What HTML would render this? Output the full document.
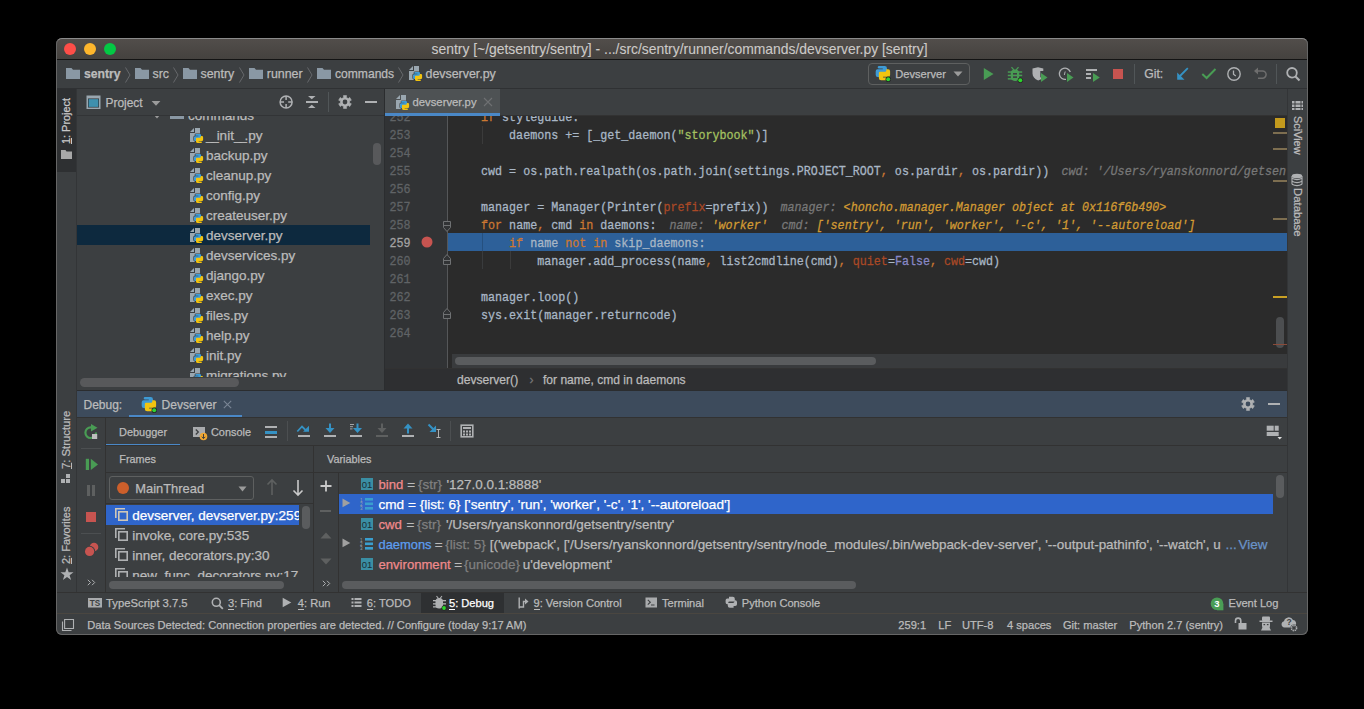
<!DOCTYPE html>
<html><head><meta charset="utf-8">
<style>
*{box-sizing:border-box;margin:0;padding:0}
html,body{width:1364px;height:709px;overflow:hidden;background:#000}
body{position:relative;font-family:"Liberation Sans",sans-serif;color:#BBBBBB}
.a{position:absolute;display:block}
.t{position:absolute;white-space:pre;line-height:1;-webkit-text-stroke:0.25px currentColor}
.mono{font-family:"Liberation Mono",monospace}
#win{position:absolute;left:0;top:0;width:1364px;height:709px;clip-path:inset(38px 56px 74px 56px round 6px)}
.clip{position:absolute;overflow:hidden}
</style></head>
<body>
<div id="win">
<div class="a" style="left:56px;top:38px;width:1252px;height:597px;background:#3C3F41;"></div><div class="a" style="left:56px;top:38px;width:1252px;height:21px;background:#4A4745;background:linear-gradient(#524E4B,#45423F);"></div><div class="a" style="left:56px;top:59px;width:1252px;height:1px;background:#141414;"></div><div class="a" style="left:64px;top:43px;width:12px;height:12px;border-radius:6px;background:#FE4E48"></div><div class="a" style="left:84px;top:43px;width:12px;height:12px;border-radius:6px;background:#FEB62C"></div><div class="a" style="left:104px;top:43px;width:12px;height:12px;border-radius:6px;background:#03C944"></div><div class="t" style="left:431.5px;top:43.00px;font-size:13.9px;color:#CCCAC8;-webkit-text-stroke:0.1px currentColor;">sentry [~/getsentry/sentry] - .../src/sentry/runner/commands/devserver.py [sentry]</div><div class="a" style="left:56px;top:88px;width:1252px;height:1px;background:#2F3133;"></div><svg class="a" style="left:66px;top:68px;" width="14" height="11" viewBox="0 0 14 11"><path d="M0 0H5.5L7 1.8H14V11H0Z" fill="#8A98A4"/></svg><div class="t" style="left:84px;top:68.00px;font-size:12.2px;color:#BBBBBB;font-weight:bold;">sentry</div><svg class="a" style="left:125px;top:67px;" width="6" height="16" viewBox="0 0 6 16"><path d="M0.5 0.5L5 8L0.5 15.5" stroke="#6B6D6F" stroke-width="0.9" fill="none"/></svg><svg class="a" style="left:135px;top:68px;" width="14" height="11" viewBox="0 0 14 11"><path d="M0 0H5.5L7 1.8H14V11H0Z" fill="#8A98A4"/></svg><div class="t" style="left:152.5px;top:68.00px;font-size:12.4px;color:#BBBBBB;">src</div><svg class="a" style="left:173px;top:67px;" width="6" height="16" viewBox="0 0 6 16"><path d="M0.5 0.5L5 8L0.5 15.5" stroke="#6B6D6F" stroke-width="0.9" fill="none"/></svg><svg class="a" style="left:183px;top:68px;" width="14" height="11" viewBox="0 0 14 11"><path d="M0 0H5.5L7 1.8H14V11H0Z" fill="#8A98A4"/></svg><div class="t" style="left:200.5px;top:68.00px;font-size:12.4px;color:#BBBBBB;">sentry</div><svg class="a" style="left:239px;top:67px;" width="6" height="16" viewBox="0 0 6 16"><path d="M0.5 0.5L5 8L0.5 15.5" stroke="#6B6D6F" stroke-width="0.9" fill="none"/></svg><svg class="a" style="left:249px;top:68px;" width="14" height="11" viewBox="0 0 14 11"><path d="M0 0H5.5L7 1.8H14V11H0Z" fill="#8A98A4"/></svg><div class="t" style="left:266.8px;top:68.00px;font-size:12.4px;color:#BBBBBB;">runner</div><svg class="a" style="left:307px;top:67px;" width="6" height="16" viewBox="0 0 6 16"><path d="M0.5 0.5L5 8L0.5 15.5" stroke="#6B6D6F" stroke-width="0.9" fill="none"/></svg><svg class="a" style="left:317px;top:68px;" width="14" height="11" viewBox="0 0 14 11"><path d="M0 0H5.5L7 1.8H14V11H0Z" fill="#8A98A4"/></svg><div class="t" style="left:335px;top:68.00px;font-size:12.1px;color:#BBBBBB;">commands</div><svg class="a" style="left:398px;top:67px;" width="6" height="16" viewBox="0 0 6 16"><path d="M0.5 0.5L5 8L0.5 15.5" stroke="#6B6D6F" stroke-width="0.9" fill="none"/></svg><svg class="a" style="left:408px;top:65px;" width="16" height="17" viewBox="0 0 16 17"><path d="M1 5L5 1V5Z" fill="#9AA7B0"/><path d="M6 1H11V6H6Z" fill="#9AA7B0"/><path d="M1 6H6V15H1Z" fill="#9AA7B0"/><path d="M6 6H11V9H6Z" fill="#9AA7B0"/><g transform="translate(4.8,6.8) scale(0.95)"><g transform="translate(0,0)" fill="#3C3F41" stroke="#3C3F41" stroke-width="1.3"><path d="M2.6 0.3H6.2A1.5 1.5 0 0 1 7.7 1.8V5A0.9 0.9 0 0 1 6.8 5.9H3.7A1 1 0 0 0 2.7 6.9V7.6H1.5A1.3 1.3 0 0 1 0.2 6.3V3.8A1.3 1.3 0 0 1 1.5 2.5H4.9V2H2.2A0.4 0.4 0 0 1 2.6 0.3Z"/><path d="M7.4 9.7H3.8A1.5 1.5 0 0 1 2.3 8.2V5A0.9 0.9 0 0 1 3.2 4.1H6.3A1 1 0 0 0 7.3 3.1V2.4H8.5A1.3 1.3 0 0 1 9.8 3.7V6.2A1.3 1.3 0 0 1 8.5 7.5H5.1V8H7.8A0.4 0.4 0 0 1 7.4 9.7Z"/></g><path d="M2.6 0.3H6.2A1.5 1.5 0 0 1 7.7 1.8V5A0.9 0.9 0 0 1 6.8 5.9H3.7A1 1 0 0 0 2.7 6.9V7.6H1.5A1.3 1.3 0 0 1 0.2 6.3V3.8A1.3 1.3 0 0 1 1.5 2.5H4.9V2H2.2A0.4 0.4 0 0 1 2.6 0.3Z" transform="translate(0,0)" fill="#3E9BD5"/><path d="M7.4 9.7H3.8A1.5 1.5 0 0 1 2.3 8.2V5A0.9 0.9 0 0 1 3.2 4.1H6.3A1 1 0 0 0 7.3 3.1V2.4H8.5A1.3 1.3 0 0 1 9.8 3.7V6.2A1.3 1.3 0 0 1 8.5 7.5H5.1V8H7.8A0.4 0.4 0 0 1 7.4 9.7Z" transform="translate(0,0)" fill="#F2C40F"/></g></svg><div class="t" style="left:425.5px;top:68.00px;font-size:12.4px;color:#BBBBBB;">devserver.py</div><div class="a" style="left:76px;top:89px;width:1px;height:503px;background:#333537;"></div><div class="a" style="left:57px;top:89px;width:19px;height:83px;background:#2E3032;"></div><div class="a" style="left:1287px;top:89px;width:1px;height:503px;background:#333537;"></div><div class="a" style="left:77px;top:115px;width:307px;height:1px;background:#323436;"></div><div class="a" style="left:384px;top:89px;width:1px;height:302px;background:#2B2D2F;"></div><div class="t" style="left:105.5px;top:98.00px;font-size:11.95px;color:#BBBBBB;">Project</div><div class="a" style="left:77px;top:225px;width:293px;height:20px;background:#0D293E;"></div><div class="clip" style="left:77px;top:116px;width:293px;height:261px"><svg class="a" style="left:93px;top:-8px" width="14" height="11"><path d="M0 0H5.5L7 1.8H14V11H0Z" fill="#8A98A4"/></svg><div class="t" style="left:111px;top:-7.00px;font-size:13.5px;color:#BBBBBB">commands</div><svg class="a" style="left:76px;top:-3px" width="8" height="8"><path d="M0.5 1.5H7.5L4 5.5Z" fill="#9A9A9A"/></svg><svg class="a" style="left:112px;top:11px" width="16" height="17" viewBox="0 0 16 17"><path d="M1 5L5 1V5Z" fill="#9AA7B0"/><path d="M6 1H11V6H6Z" fill="#9AA7B0"/><path d="M1 6H6V15H1Z" fill="#9AA7B0"/><path d="M6 6H11V9H6Z" fill="#9AA7B0"/><g transform="translate(4.8,6.8) scale(0.95)"><g transform="translate(0,0)" fill="#3C3F41" stroke="#3C3F41" stroke-width="1.3"><path d="M2.6 0.3H6.2A1.5 1.5 0 0 1 7.7 1.8V5A0.9 0.9 0 0 1 6.8 5.9H3.7A1 1 0 0 0 2.7 6.9V7.6H1.5A1.3 1.3 0 0 1 0.2 6.3V3.8A1.3 1.3 0 0 1 1.5 2.5H4.9V2H2.2A0.4 0.4 0 0 1 2.6 0.3Z"/><path d="M7.4 9.7H3.8A1.5 1.5 0 0 1 2.3 8.2V5A0.9 0.9 0 0 1 3.2 4.1H6.3A1 1 0 0 0 7.3 3.1V2.4H8.5A1.3 1.3 0 0 1 9.8 3.7V6.2A1.3 1.3 0 0 1 8.5 7.5H5.1V8H7.8A0.4 0.4 0 0 1 7.4 9.7Z"/></g><path d="M2.6 0.3H6.2A1.5 1.5 0 0 1 7.7 1.8V5A0.9 0.9 0 0 1 6.8 5.9H3.7A1 1 0 0 0 2.7 6.9V7.6H1.5A1.3 1.3 0 0 1 0.2 6.3V3.8A1.3 1.3 0 0 1 1.5 2.5H4.9V2H2.2A0.4 0.4 0 0 1 2.6 0.3Z" transform="translate(0,0)" fill="#3E9BD5"/><path d="M7.4 9.7H3.8A1.5 1.5 0 0 1 2.3 8.2V5A0.9 0.9 0 0 1 3.2 4.1H6.3A1 1 0 0 0 7.3 3.1V2.4H8.5A1.3 1.3 0 0 1 9.8 3.7V6.2A1.3 1.3 0 0 1 8.5 7.5H5.1V8H7.8A0.4 0.4 0 0 1 7.4 9.7Z" transform="translate(0,0)" fill="#F2C40F"/></g></svg><div class="t" style="left:129px;top:13.00px;font-size:13.5px;color:#BBBBBB"><span style="letter-spacing:-2.2px">__</span>init<span style="letter-spacing:-2.2px">__</span>.py</div><svg class="a" style="left:112px;top:31px" width="16" height="17" viewBox="0 0 16 17"><path d="M1 5L5 1V5Z" fill="#9AA7B0"/><path d="M6 1H11V6H6Z" fill="#9AA7B0"/><path d="M1 6H6V15H1Z" fill="#9AA7B0"/><path d="M6 6H11V9H6Z" fill="#9AA7B0"/><g transform="translate(4.8,6.8) scale(0.95)"><g transform="translate(0,0)" fill="#3C3F41" stroke="#3C3F41" stroke-width="1.3"><path d="M2.6 0.3H6.2A1.5 1.5 0 0 1 7.7 1.8V5A0.9 0.9 0 0 1 6.8 5.9H3.7A1 1 0 0 0 2.7 6.9V7.6H1.5A1.3 1.3 0 0 1 0.2 6.3V3.8A1.3 1.3 0 0 1 1.5 2.5H4.9V2H2.2A0.4 0.4 0 0 1 2.6 0.3Z"/><path d="M7.4 9.7H3.8A1.5 1.5 0 0 1 2.3 8.2V5A0.9 0.9 0 0 1 3.2 4.1H6.3A1 1 0 0 0 7.3 3.1V2.4H8.5A1.3 1.3 0 0 1 9.8 3.7V6.2A1.3 1.3 0 0 1 8.5 7.5H5.1V8H7.8A0.4 0.4 0 0 1 7.4 9.7Z"/></g><path d="M2.6 0.3H6.2A1.5 1.5 0 0 1 7.7 1.8V5A0.9 0.9 0 0 1 6.8 5.9H3.7A1 1 0 0 0 2.7 6.9V7.6H1.5A1.3 1.3 0 0 1 0.2 6.3V3.8A1.3 1.3 0 0 1 1.5 2.5H4.9V2H2.2A0.4 0.4 0 0 1 2.6 0.3Z" transform="translate(0,0)" fill="#3E9BD5"/><path d="M7.4 9.7H3.8A1.5 1.5 0 0 1 2.3 8.2V5A0.9 0.9 0 0 1 3.2 4.1H6.3A1 1 0 0 0 7.3 3.1V2.4H8.5A1.3 1.3 0 0 1 9.8 3.7V6.2A1.3 1.3 0 0 1 8.5 7.5H5.1V8H7.8A0.4 0.4 0 0 1 7.4 9.7Z" transform="translate(0,0)" fill="#F2C40F"/></g></svg><div class="t" style="left:129px;top:33.00px;font-size:13.5px;color:#BBBBBB">backup.py</div><svg class="a" style="left:112px;top:51px" width="16" height="17" viewBox="0 0 16 17"><path d="M1 5L5 1V5Z" fill="#9AA7B0"/><path d="M6 1H11V6H6Z" fill="#9AA7B0"/><path d="M1 6H6V15H1Z" fill="#9AA7B0"/><path d="M6 6H11V9H6Z" fill="#9AA7B0"/><g transform="translate(4.8,6.8) scale(0.95)"><g transform="translate(0,0)" fill="#3C3F41" stroke="#3C3F41" stroke-width="1.3"><path d="M2.6 0.3H6.2A1.5 1.5 0 0 1 7.7 1.8V5A0.9 0.9 0 0 1 6.8 5.9H3.7A1 1 0 0 0 2.7 6.9V7.6H1.5A1.3 1.3 0 0 1 0.2 6.3V3.8A1.3 1.3 0 0 1 1.5 2.5H4.9V2H2.2A0.4 0.4 0 0 1 2.6 0.3Z"/><path d="M7.4 9.7H3.8A1.5 1.5 0 0 1 2.3 8.2V5A0.9 0.9 0 0 1 3.2 4.1H6.3A1 1 0 0 0 7.3 3.1V2.4H8.5A1.3 1.3 0 0 1 9.8 3.7V6.2A1.3 1.3 0 0 1 8.5 7.5H5.1V8H7.8A0.4 0.4 0 0 1 7.4 9.7Z"/></g><path d="M2.6 0.3H6.2A1.5 1.5 0 0 1 7.7 1.8V5A0.9 0.9 0 0 1 6.8 5.9H3.7A1 1 0 0 0 2.7 6.9V7.6H1.5A1.3 1.3 0 0 1 0.2 6.3V3.8A1.3 1.3 0 0 1 1.5 2.5H4.9V2H2.2A0.4 0.4 0 0 1 2.6 0.3Z" transform="translate(0,0)" fill="#3E9BD5"/><path d="M7.4 9.7H3.8A1.5 1.5 0 0 1 2.3 8.2V5A0.9 0.9 0 0 1 3.2 4.1H6.3A1 1 0 0 0 7.3 3.1V2.4H8.5A1.3 1.3 0 0 1 9.8 3.7V6.2A1.3 1.3 0 0 1 8.5 7.5H5.1V8H7.8A0.4 0.4 0 0 1 7.4 9.7Z" transform="translate(0,0)" fill="#F2C40F"/></g></svg><div class="t" style="left:129px;top:53.00px;font-size:13.5px;color:#BBBBBB">cleanup.py</div><svg class="a" style="left:112px;top:71px" width="16" height="17" viewBox="0 0 16 17"><path d="M1 5L5 1V5Z" fill="#9AA7B0"/><path d="M6 1H11V6H6Z" fill="#9AA7B0"/><path d="M1 6H6V15H1Z" fill="#9AA7B0"/><path d="M6 6H11V9H6Z" fill="#9AA7B0"/><g transform="translate(4.8,6.8) scale(0.95)"><g transform="translate(0,0)" fill="#3C3F41" stroke="#3C3F41" stroke-width="1.3"><path d="M2.6 0.3H6.2A1.5 1.5 0 0 1 7.7 1.8V5A0.9 0.9 0 0 1 6.8 5.9H3.7A1 1 0 0 0 2.7 6.9V7.6H1.5A1.3 1.3 0 0 1 0.2 6.3V3.8A1.3 1.3 0 0 1 1.5 2.5H4.9V2H2.2A0.4 0.4 0 0 1 2.6 0.3Z"/><path d="M7.4 9.7H3.8A1.5 1.5 0 0 1 2.3 8.2V5A0.9 0.9 0 0 1 3.2 4.1H6.3A1 1 0 0 0 7.3 3.1V2.4H8.5A1.3 1.3 0 0 1 9.8 3.7V6.2A1.3 1.3 0 0 1 8.5 7.5H5.1V8H7.8A0.4 0.4 0 0 1 7.4 9.7Z"/></g><path d="M2.6 0.3H6.2A1.5 1.5 0 0 1 7.7 1.8V5A0.9 0.9 0 0 1 6.8 5.9H3.7A1 1 0 0 0 2.7 6.9V7.6H1.5A1.3 1.3 0 0 1 0.2 6.3V3.8A1.3 1.3 0 0 1 1.5 2.5H4.9V2H2.2A0.4 0.4 0 0 1 2.6 0.3Z" transform="translate(0,0)" fill="#3E9BD5"/><path d="M7.4 9.7H3.8A1.5 1.5 0 0 1 2.3 8.2V5A0.9 0.9 0 0 1 3.2 4.1H6.3A1 1 0 0 0 7.3 3.1V2.4H8.5A1.3 1.3 0 0 1 9.8 3.7V6.2A1.3 1.3 0 0 1 8.5 7.5H5.1V8H7.8A0.4 0.4 0 0 1 7.4 9.7Z" transform="translate(0,0)" fill="#F2C40F"/></g></svg><div class="t" style="left:129px;top:73.00px;font-size:13.5px;color:#BBBBBB">config.py</div><svg class="a" style="left:112px;top:91px" width="16" height="17" viewBox="0 0 16 17"><path d="M1 5L5 1V5Z" fill="#9AA7B0"/><path d="M6 1H11V6H6Z" fill="#9AA7B0"/><path d="M1 6H6V15H1Z" fill="#9AA7B0"/><path d="M6 6H11V9H6Z" fill="#9AA7B0"/><g transform="translate(4.8,6.8) scale(0.95)"><g transform="translate(0,0)" fill="#3C3F41" stroke="#3C3F41" stroke-width="1.3"><path d="M2.6 0.3H6.2A1.5 1.5 0 0 1 7.7 1.8V5A0.9 0.9 0 0 1 6.8 5.9H3.7A1 1 0 0 0 2.7 6.9V7.6H1.5A1.3 1.3 0 0 1 0.2 6.3V3.8A1.3 1.3 0 0 1 1.5 2.5H4.9V2H2.2A0.4 0.4 0 0 1 2.6 0.3Z"/><path d="M7.4 9.7H3.8A1.5 1.5 0 0 1 2.3 8.2V5A0.9 0.9 0 0 1 3.2 4.1H6.3A1 1 0 0 0 7.3 3.1V2.4H8.5A1.3 1.3 0 0 1 9.8 3.7V6.2A1.3 1.3 0 0 1 8.5 7.5H5.1V8H7.8A0.4 0.4 0 0 1 7.4 9.7Z"/></g><path d="M2.6 0.3H6.2A1.5 1.5 0 0 1 7.7 1.8V5A0.9 0.9 0 0 1 6.8 5.9H3.7A1 1 0 0 0 2.7 6.9V7.6H1.5A1.3 1.3 0 0 1 0.2 6.3V3.8A1.3 1.3 0 0 1 1.5 2.5H4.9V2H2.2A0.4 0.4 0 0 1 2.6 0.3Z" transform="translate(0,0)" fill="#3E9BD5"/><path d="M7.4 9.7H3.8A1.5 1.5 0 0 1 2.3 8.2V5A0.9 0.9 0 0 1 3.2 4.1H6.3A1 1 0 0 0 7.3 3.1V2.4H8.5A1.3 1.3 0 0 1 9.8 3.7V6.2A1.3 1.3 0 0 1 8.5 7.5H5.1V8H7.8A0.4 0.4 0 0 1 7.4 9.7Z" transform="translate(0,0)" fill="#F2C40F"/></g></svg><div class="t" style="left:129px;top:93.00px;font-size:13.5px;color:#BBBBBB">createuser.py</div><svg class="a" style="left:112px;top:111px" width="16" height="17" viewBox="0 0 16 17"><path d="M1 5L5 1V5Z" fill="#9AA7B0"/><path d="M6 1H11V6H6Z" fill="#9AA7B0"/><path d="M1 6H6V15H1Z" fill="#9AA7B0"/><path d="M6 6H11V9H6Z" fill="#9AA7B0"/><g transform="translate(4.8,6.8) scale(0.95)"><g transform="translate(0,0)" fill="#0D293E" stroke="#0D293E" stroke-width="1.3"><path d="M2.6 0.3H6.2A1.5 1.5 0 0 1 7.7 1.8V5A0.9 0.9 0 0 1 6.8 5.9H3.7A1 1 0 0 0 2.7 6.9V7.6H1.5A1.3 1.3 0 0 1 0.2 6.3V3.8A1.3 1.3 0 0 1 1.5 2.5H4.9V2H2.2A0.4 0.4 0 0 1 2.6 0.3Z"/><path d="M7.4 9.7H3.8A1.5 1.5 0 0 1 2.3 8.2V5A0.9 0.9 0 0 1 3.2 4.1H6.3A1 1 0 0 0 7.3 3.1V2.4H8.5A1.3 1.3 0 0 1 9.8 3.7V6.2A1.3 1.3 0 0 1 8.5 7.5H5.1V8H7.8A0.4 0.4 0 0 1 7.4 9.7Z"/></g><path d="M2.6 0.3H6.2A1.5 1.5 0 0 1 7.7 1.8V5A0.9 0.9 0 0 1 6.8 5.9H3.7A1 1 0 0 0 2.7 6.9V7.6H1.5A1.3 1.3 0 0 1 0.2 6.3V3.8A1.3 1.3 0 0 1 1.5 2.5H4.9V2H2.2A0.4 0.4 0 0 1 2.6 0.3Z" transform="translate(0,0)" fill="#3E9BD5"/><path d="M7.4 9.7H3.8A1.5 1.5 0 0 1 2.3 8.2V5A0.9 0.9 0 0 1 3.2 4.1H6.3A1 1 0 0 0 7.3 3.1V2.4H8.5A1.3 1.3 0 0 1 9.8 3.7V6.2A1.3 1.3 0 0 1 8.5 7.5H5.1V8H7.8A0.4 0.4 0 0 1 7.4 9.7Z" transform="translate(0,0)" fill="#F2C40F"/></g></svg><div class="t" style="left:129px;top:113.00px;font-size:13.5px;color:#BBBBBB">devserver.py</div><svg class="a" style="left:112px;top:131px" width="16" height="17" viewBox="0 0 16 17"><path d="M1 5L5 1V5Z" fill="#9AA7B0"/><path d="M6 1H11V6H6Z" fill="#9AA7B0"/><path d="M1 6H6V15H1Z" fill="#9AA7B0"/><path d="M6 6H11V9H6Z" fill="#9AA7B0"/><g transform="translate(4.8,6.8) scale(0.95)"><g transform="translate(0,0)" fill="#3C3F41" stroke="#3C3F41" stroke-width="1.3"><path d="M2.6 0.3H6.2A1.5 1.5 0 0 1 7.7 1.8V5A0.9 0.9 0 0 1 6.8 5.9H3.7A1 1 0 0 0 2.7 6.9V7.6H1.5A1.3 1.3 0 0 1 0.2 6.3V3.8A1.3 1.3 0 0 1 1.5 2.5H4.9V2H2.2A0.4 0.4 0 0 1 2.6 0.3Z"/><path d="M7.4 9.7H3.8A1.5 1.5 0 0 1 2.3 8.2V5A0.9 0.9 0 0 1 3.2 4.1H6.3A1 1 0 0 0 7.3 3.1V2.4H8.5A1.3 1.3 0 0 1 9.8 3.7V6.2A1.3 1.3 0 0 1 8.5 7.5H5.1V8H7.8A0.4 0.4 0 0 1 7.4 9.7Z"/></g><path d="M2.6 0.3H6.2A1.5 1.5 0 0 1 7.7 1.8V5A0.9 0.9 0 0 1 6.8 5.9H3.7A1 1 0 0 0 2.7 6.9V7.6H1.5A1.3 1.3 0 0 1 0.2 6.3V3.8A1.3 1.3 0 0 1 1.5 2.5H4.9V2H2.2A0.4 0.4 0 0 1 2.6 0.3Z" transform="translate(0,0)" fill="#3E9BD5"/><path d="M7.4 9.7H3.8A1.5 1.5 0 0 1 2.3 8.2V5A0.9 0.9 0 0 1 3.2 4.1H6.3A1 1 0 0 0 7.3 3.1V2.4H8.5A1.3 1.3 0 0 1 9.8 3.7V6.2A1.3 1.3 0 0 1 8.5 7.5H5.1V8H7.8A0.4 0.4 0 0 1 7.4 9.7Z" transform="translate(0,0)" fill="#F2C40F"/></g></svg><div class="t" style="left:129px;top:133.00px;font-size:13.5px;color:#BBBBBB">devservices.py</div><svg class="a" style="left:112px;top:151px" width="16" height="17" viewBox="0 0 16 17"><path d="M1 5L5 1V5Z" fill="#9AA7B0"/><path d="M6 1H11V6H6Z" fill="#9AA7B0"/><path d="M1 6H6V15H1Z" fill="#9AA7B0"/><path d="M6 6H11V9H6Z" fill="#9AA7B0"/><g transform="translate(4.8,6.8) scale(0.95)"><g transform="translate(0,0)" fill="#3C3F41" stroke="#3C3F41" stroke-width="1.3"><path d="M2.6 0.3H6.2A1.5 1.5 0 0 1 7.7 1.8V5A0.9 0.9 0 0 1 6.8 5.9H3.7A1 1 0 0 0 2.7 6.9V7.6H1.5A1.3 1.3 0 0 1 0.2 6.3V3.8A1.3 1.3 0 0 1 1.5 2.5H4.9V2H2.2A0.4 0.4 0 0 1 2.6 0.3Z"/><path d="M7.4 9.7H3.8A1.5 1.5 0 0 1 2.3 8.2V5A0.9 0.9 0 0 1 3.2 4.1H6.3A1 1 0 0 0 7.3 3.1V2.4H8.5A1.3 1.3 0 0 1 9.8 3.7V6.2A1.3 1.3 0 0 1 8.5 7.5H5.1V8H7.8A0.4 0.4 0 0 1 7.4 9.7Z"/></g><path d="M2.6 0.3H6.2A1.5 1.5 0 0 1 7.7 1.8V5A0.9 0.9 0 0 1 6.8 5.9H3.7A1 1 0 0 0 2.7 6.9V7.6H1.5A1.3 1.3 0 0 1 0.2 6.3V3.8A1.3 1.3 0 0 1 1.5 2.5H4.9V2H2.2A0.4 0.4 0 0 1 2.6 0.3Z" transform="translate(0,0)" fill="#3E9BD5"/><path d="M7.4 9.7H3.8A1.5 1.5 0 0 1 2.3 8.2V5A0.9 0.9 0 0 1 3.2 4.1H6.3A1 1 0 0 0 7.3 3.1V2.4H8.5A1.3 1.3 0 0 1 9.8 3.7V6.2A1.3 1.3 0 0 1 8.5 7.5H5.1V8H7.8A0.4 0.4 0 0 1 7.4 9.7Z" transform="translate(0,0)" fill="#F2C40F"/></g></svg><div class="t" style="left:129px;top:153.00px;font-size:13.5px;color:#BBBBBB">django.py</div><svg class="a" style="left:112px;top:171px" width="16" height="17" viewBox="0 0 16 17"><path d="M1 5L5 1V5Z" fill="#9AA7B0"/><path d="M6 1H11V6H6Z" fill="#9AA7B0"/><path d="M1 6H6V15H1Z" fill="#9AA7B0"/><path d="M6 6H11V9H6Z" fill="#9AA7B0"/><g transform="translate(4.8,6.8) scale(0.95)"><g transform="translate(0,0)" fill="#3C3F41" stroke="#3C3F41" stroke-width="1.3"><path d="M2.6 0.3H6.2A1.5 1.5 0 0 1 7.7 1.8V5A0.9 0.9 0 0 1 6.8 5.9H3.7A1 1 0 0 0 2.7 6.9V7.6H1.5A1.3 1.3 0 0 1 0.2 6.3V3.8A1.3 1.3 0 0 1 1.5 2.5H4.9V2H2.2A0.4 0.4 0 0 1 2.6 0.3Z"/><path d="M7.4 9.7H3.8A1.5 1.5 0 0 1 2.3 8.2V5A0.9 0.9 0 0 1 3.2 4.1H6.3A1 1 0 0 0 7.3 3.1V2.4H8.5A1.3 1.3 0 0 1 9.8 3.7V6.2A1.3 1.3 0 0 1 8.5 7.5H5.1V8H7.8A0.4 0.4 0 0 1 7.4 9.7Z"/></g><path d="M2.6 0.3H6.2A1.5 1.5 0 0 1 7.7 1.8V5A0.9 0.9 0 0 1 6.8 5.9H3.7A1 1 0 0 0 2.7 6.9V7.6H1.5A1.3 1.3 0 0 1 0.2 6.3V3.8A1.3 1.3 0 0 1 1.5 2.5H4.9V2H2.2A0.4 0.4 0 0 1 2.6 0.3Z" transform="translate(0,0)" fill="#3E9BD5"/><path d="M7.4 9.7H3.8A1.5 1.5 0 0 1 2.3 8.2V5A0.9 0.9 0 0 1 3.2 4.1H6.3A1 1 0 0 0 7.3 3.1V2.4H8.5A1.3 1.3 0 0 1 9.8 3.7V6.2A1.3 1.3 0 0 1 8.5 7.5H5.1V8H7.8A0.4 0.4 0 0 1 7.4 9.7Z" transform="translate(0,0)" fill="#F2C40F"/></g></svg><div class="t" style="left:129px;top:173.00px;font-size:13.5px;color:#BBBBBB">exec.py</div><svg class="a" style="left:112px;top:191px" width="16" height="17" viewBox="0 0 16 17"><path d="M1 5L5 1V5Z" fill="#9AA7B0"/><path d="M6 1H11V6H6Z" fill="#9AA7B0"/><path d="M1 6H6V15H1Z" fill="#9AA7B0"/><path d="M6 6H11V9H6Z" fill="#9AA7B0"/><g transform="translate(4.8,6.8) scale(0.95)"><g transform="translate(0,0)" fill="#3C3F41" stroke="#3C3F41" stroke-width="1.3"><path d="M2.6 0.3H6.2A1.5 1.5 0 0 1 7.7 1.8V5A0.9 0.9 0 0 1 6.8 5.9H3.7A1 1 0 0 0 2.7 6.9V7.6H1.5A1.3 1.3 0 0 1 0.2 6.3V3.8A1.3 1.3 0 0 1 1.5 2.5H4.9V2H2.2A0.4 0.4 0 0 1 2.6 0.3Z"/><path d="M7.4 9.7H3.8A1.5 1.5 0 0 1 2.3 8.2V5A0.9 0.9 0 0 1 3.2 4.1H6.3A1 1 0 0 0 7.3 3.1V2.4H8.5A1.3 1.3 0 0 1 9.8 3.7V6.2A1.3 1.3 0 0 1 8.5 7.5H5.1V8H7.8A0.4 0.4 0 0 1 7.4 9.7Z"/></g><path d="M2.6 0.3H6.2A1.5 1.5 0 0 1 7.7 1.8V5A0.9 0.9 0 0 1 6.8 5.9H3.7A1 1 0 0 0 2.7 6.9V7.6H1.5A1.3 1.3 0 0 1 0.2 6.3V3.8A1.3 1.3 0 0 1 1.5 2.5H4.9V2H2.2A0.4 0.4 0 0 1 2.6 0.3Z" transform="translate(0,0)" fill="#3E9BD5"/><path d="M7.4 9.7H3.8A1.5 1.5 0 0 1 2.3 8.2V5A0.9 0.9 0 0 1 3.2 4.1H6.3A1 1 0 0 0 7.3 3.1V2.4H8.5A1.3 1.3 0 0 1 9.8 3.7V6.2A1.3 1.3 0 0 1 8.5 7.5H5.1V8H7.8A0.4 0.4 0 0 1 7.4 9.7Z" transform="translate(0,0)" fill="#F2C40F"/></g></svg><div class="t" style="left:129px;top:193.00px;font-size:13.5px;color:#BBBBBB">files.py</div><svg class="a" style="left:112px;top:211px" width="16" height="17" viewBox="0 0 16 17"><path d="M1 5L5 1V5Z" fill="#9AA7B0"/><path d="M6 1H11V6H6Z" fill="#9AA7B0"/><path d="M1 6H6V15H1Z" fill="#9AA7B0"/><path d="M6 6H11V9H6Z" fill="#9AA7B0"/><g transform="translate(4.8,6.8) scale(0.95)"><g transform="translate(0,0)" fill="#3C3F41" stroke="#3C3F41" stroke-width="1.3"><path d="M2.6 0.3H6.2A1.5 1.5 0 0 1 7.7 1.8V5A0.9 0.9 0 0 1 6.8 5.9H3.7A1 1 0 0 0 2.7 6.9V7.6H1.5A1.3 1.3 0 0 1 0.2 6.3V3.8A1.3 1.3 0 0 1 1.5 2.5H4.9V2H2.2A0.4 0.4 0 0 1 2.6 0.3Z"/><path d="M7.4 9.7H3.8A1.5 1.5 0 0 1 2.3 8.2V5A0.9 0.9 0 0 1 3.2 4.1H6.3A1 1 0 0 0 7.3 3.1V2.4H8.5A1.3 1.3 0 0 1 9.8 3.7V6.2A1.3 1.3 0 0 1 8.5 7.5H5.1V8H7.8A0.4 0.4 0 0 1 7.4 9.7Z"/></g><path d="M2.6 0.3H6.2A1.5 1.5 0 0 1 7.7 1.8V5A0.9 0.9 0 0 1 6.8 5.9H3.7A1 1 0 0 0 2.7 6.9V7.6H1.5A1.3 1.3 0 0 1 0.2 6.3V3.8A1.3 1.3 0 0 1 1.5 2.5H4.9V2H2.2A0.4 0.4 0 0 1 2.6 0.3Z" transform="translate(0,0)" fill="#3E9BD5"/><path d="M7.4 9.7H3.8A1.5 1.5 0 0 1 2.3 8.2V5A0.9 0.9 0 0 1 3.2 4.1H6.3A1 1 0 0 0 7.3 3.1V2.4H8.5A1.3 1.3 0 0 1 9.8 3.7V6.2A1.3 1.3 0 0 1 8.5 7.5H5.1V8H7.8A0.4 0.4 0 0 1 7.4 9.7Z" transform="translate(0,0)" fill="#F2C40F"/></g></svg><div class="t" style="left:129px;top:213.00px;font-size:13.5px;color:#BBBBBB">help.py</div><svg class="a" style="left:112px;top:231px" width="16" height="17" viewBox="0 0 16 17"><path d="M1 5L5 1V5Z" fill="#9AA7B0"/><path d="M6 1H11V6H6Z" fill="#9AA7B0"/><path d="M1 6H6V15H1Z" fill="#9AA7B0"/><path d="M6 6H11V9H6Z" fill="#9AA7B0"/><g transform="translate(4.8,6.8) scale(0.95)"><g transform="translate(0,0)" fill="#3C3F41" stroke="#3C3F41" stroke-width="1.3"><path d="M2.6 0.3H6.2A1.5 1.5 0 0 1 7.7 1.8V5A0.9 0.9 0 0 1 6.8 5.9H3.7A1 1 0 0 0 2.7 6.9V7.6H1.5A1.3 1.3 0 0 1 0.2 6.3V3.8A1.3 1.3 0 0 1 1.5 2.5H4.9V2H2.2A0.4 0.4 0 0 1 2.6 0.3Z"/><path d="M7.4 9.7H3.8A1.5 1.5 0 0 1 2.3 8.2V5A0.9 0.9 0 0 1 3.2 4.1H6.3A1 1 0 0 0 7.3 3.1V2.4H8.5A1.3 1.3 0 0 1 9.8 3.7V6.2A1.3 1.3 0 0 1 8.5 7.5H5.1V8H7.8A0.4 0.4 0 0 1 7.4 9.7Z"/></g><path d="M2.6 0.3H6.2A1.5 1.5 0 0 1 7.7 1.8V5A0.9 0.9 0 0 1 6.8 5.9H3.7A1 1 0 0 0 2.7 6.9V7.6H1.5A1.3 1.3 0 0 1 0.2 6.3V3.8A1.3 1.3 0 0 1 1.5 2.5H4.9V2H2.2A0.4 0.4 0 0 1 2.6 0.3Z" transform="translate(0,0)" fill="#3E9BD5"/><path d="M7.4 9.7H3.8A1.5 1.5 0 0 1 2.3 8.2V5A0.9 0.9 0 0 1 3.2 4.1H6.3A1 1 0 0 0 7.3 3.1V2.4H8.5A1.3 1.3 0 0 1 9.8 3.7V6.2A1.3 1.3 0 0 1 8.5 7.5H5.1V8H7.8A0.4 0.4 0 0 1 7.4 9.7Z" transform="translate(0,0)" fill="#F2C40F"/></g></svg><div class="t" style="left:129px;top:233.00px;font-size:13.5px;color:#BBBBBB">init.py</div><svg class="a" style="left:112px;top:251px" width="16" height="17" viewBox="0 0 16 17"><path d="M1 5L5 1V5Z" fill="#9AA7B0"/><path d="M6 1H11V6H6Z" fill="#9AA7B0"/><path d="M1 6H6V15H1Z" fill="#9AA7B0"/><path d="M6 6H11V9H6Z" fill="#9AA7B0"/><g transform="translate(4.8,6.8) scale(0.95)"><g transform="translate(0,0)" fill="#3C3F41" stroke="#3C3F41" stroke-width="1.3"><path d="M2.6 0.3H6.2A1.5 1.5 0 0 1 7.7 1.8V5A0.9 0.9 0 0 1 6.8 5.9H3.7A1 1 0 0 0 2.7 6.9V7.6H1.5A1.3 1.3 0 0 1 0.2 6.3V3.8A1.3 1.3 0 0 1 1.5 2.5H4.9V2H2.2A0.4 0.4 0 0 1 2.6 0.3Z"/><path d="M7.4 9.7H3.8A1.5 1.5 0 0 1 2.3 8.2V5A0.9 0.9 0 0 1 3.2 4.1H6.3A1 1 0 0 0 7.3 3.1V2.4H8.5A1.3 1.3 0 0 1 9.8 3.7V6.2A1.3 1.3 0 0 1 8.5 7.5H5.1V8H7.8A0.4 0.4 0 0 1 7.4 9.7Z"/></g><path d="M2.6 0.3H6.2A1.5 1.5 0 0 1 7.7 1.8V5A0.9 0.9 0 0 1 6.8 5.9H3.7A1 1 0 0 0 2.7 6.9V7.6H1.5A1.3 1.3 0 0 1 0.2 6.3V3.8A1.3 1.3 0 0 1 1.5 2.5H4.9V2H2.2A0.4 0.4 0 0 1 2.6 0.3Z" transform="translate(0,0)" fill="#3E9BD5"/><path d="M7.4 9.7H3.8A1.5 1.5 0 0 1 2.3 8.2V5A0.9 0.9 0 0 1 3.2 4.1H6.3A1 1 0 0 0 7.3 3.1V2.4H8.5A1.3 1.3 0 0 1 9.8 3.7V6.2A1.3 1.3 0 0 1 8.5 7.5H5.1V8H7.8A0.4 0.4 0 0 1 7.4 9.7Z" transform="translate(0,0)" fill="#F2C40F"/></g></svg><div class="t" style="left:129px;top:253.00px;font-size:13.5px;color:#BBBBBB">migrations.py</div></div><div class="a" style="left:385px;top:89px;width:115px;height:24px;background:#4E5254;"></div><div class="a" style="left:385px;top:113px;width:115px;height:3px;background:#4A88C7;"></div><div class="a" style="left:500px;top:115px;width:787px;height:1px;background:#323232;"></div><svg class="a" style="left:395px;top:94px;" width="16" height="17" viewBox="0 0 16 17"><path d="M1 5L5 1V5Z" fill="#9AA7B0"/><path d="M6 1H11V6H6Z" fill="#9AA7B0"/><path d="M1 6H6V15H1Z" fill="#9AA7B0"/><path d="M6 6H11V9H6Z" fill="#9AA7B0"/><g transform="translate(4.8,6.8) scale(0.95)"><g transform="translate(0,0)" fill="#4E5254" stroke="#4E5254" stroke-width="1.3"><path d="M2.6 0.3H6.2A1.5 1.5 0 0 1 7.7 1.8V5A0.9 0.9 0 0 1 6.8 5.9H3.7A1 1 0 0 0 2.7 6.9V7.6H1.5A1.3 1.3 0 0 1 0.2 6.3V3.8A1.3 1.3 0 0 1 1.5 2.5H4.9V2H2.2A0.4 0.4 0 0 1 2.6 0.3Z"/><path d="M7.4 9.7H3.8A1.5 1.5 0 0 1 2.3 8.2V5A0.9 0.9 0 0 1 3.2 4.1H6.3A1 1 0 0 0 7.3 3.1V2.4H8.5A1.3 1.3 0 0 1 9.8 3.7V6.2A1.3 1.3 0 0 1 8.5 7.5H5.1V8H7.8A0.4 0.4 0 0 1 7.4 9.7Z"/></g><path d="M2.6 0.3H6.2A1.5 1.5 0 0 1 7.7 1.8V5A0.9 0.9 0 0 1 6.8 5.9H3.7A1 1 0 0 0 2.7 6.9V7.6H1.5A1.3 1.3 0 0 1 0.2 6.3V3.8A1.3 1.3 0 0 1 1.5 2.5H4.9V2H2.2A0.4 0.4 0 0 1 2.6 0.3Z" transform="translate(0,0)" fill="#3E9BD5"/><path d="M7.4 9.7H3.8A1.5 1.5 0 0 1 2.3 8.2V5A0.9 0.9 0 0 1 3.2 4.1H6.3A1 1 0 0 0 7.3 3.1V2.4H8.5A1.3 1.3 0 0 1 9.8 3.7V6.2A1.3 1.3 0 0 1 8.5 7.5H5.1V8H7.8A0.4 0.4 0 0 1 7.4 9.7Z" transform="translate(0,0)" fill="#F2C40F"/></g></svg><div class="t" style="left:412.5px;top:97.00px;font-size:11.3px;color:#BBBBBB;">devserver.py</div><div class="a" style="left:385px;top:116px;width:63px;height:252px;background:#313335;"></div><div class="a" style="left:448px;top:116px;width:839px;height:252px;background:#2B2B2B;"></div><div class="a" style="left:447px;top:116px;width:1px;height:252px;background:#555759;"></div><div class="a" style="left:448px;top:233px;width:839px;height:18px;background:#2D6099;"></div><div class="a" style="left:452px;top:354px;width:835px;height:14px;background:#393B3D;"></div><div class="a" style="left:455px;top:357px;width:421px;height:8px;background:#5A5C5E;border-radius:4px;"></div><div class="a" style="left:385px;top:368px;width:902px;height:1px;background:#323232;"></div><div class="a" style="left:385px;top:369px;width:902px;height:21px;background:#2E2F31;"></div><div class="t" style="left:457px;top:374.00px;font-size:12.1px;color:#BBBBBB;">devserver()</div><div class="t" style="left:529.5px;top:374.00px;font-size:12px;color:#777777;">›</div><div class="t" style="left:543px;top:374.00px;font-size:12.05px;color:#BBBBBB;">for name, cmd in daemons</div><div class="a" style="left:77px;top:390px;width:1210px;height:1px;background:#2B2D2F;"></div><div class="a" style="left:77px;top:391px;width:1210px;height:26px;background:#3D4B5C;"></div><div class="a" style="left:129px;top:415px;width:113px;height:2px;background:#4A88C7;"></div><div class="a" style="left:77px;top:417px;width:1210px;height:1px;background:#323232;"></div><div class="t" style="left:83.5px;top:399.00px;font-size:12.0px;color:#BBBBBB;">Debug:</div><svg class="a" style="left:141px;top:396px;" width="17" height="17" viewBox="0 0 17 17"><g transform="translate(0.4,0.6) scale(1.5)"><path d="M2.6 0.3H6.2A1.5 1.5 0 0 1 7.7 1.8V5A0.9 0.9 0 0 1 6.8 5.9H3.7A1 1 0 0 0 2.7 6.9V7.6H1.5A1.3 1.3 0 0 1 0.2 6.3V3.8A1.3 1.3 0 0 1 1.5 2.5H4.9V2H2.2A0.4 0.4 0 0 1 2.6 0.3Z" transform="translate(0,0)" fill="#3E9BD5"/><path d="M7.4 9.7H3.8A1.5 1.5 0 0 1 2.3 8.2V5A0.9 0.9 0 0 1 3.2 4.1H6.3A1 1 0 0 0 7.3 3.1V2.4H8.5A1.3 1.3 0 0 1 9.8 3.7V6.2A1.3 1.3 0 0 1 8.5 7.5H5.1V8H7.8A0.4 0.4 0 0 1 7.4 9.7Z" transform="translate(0,0)" fill="#F2C40F"/></g><circle cx="13.2" cy="14.2" r="2.6" fill="#1C1C1C"/><circle cx="13.2" cy="14.2" r="2" fill="#32D233"/></svg><div class="t" style="left:161.5px;top:399.00px;font-size:12.05px;color:#BBBBBB;">Devserver</div><div class="a" style="left:105px;top:418px;width:1px;height:174px;background:#323232;"></div><div class="a" style="left:106px;top:444px;width:74px;height:2px;background:#4A88C7;"></div><div class="a" style="left:106px;top:445px;width:1181px;height:1px;background:#323232;"></div><div class="t" style="left:119px;top:427.00px;font-size:10.95px;color:#BBBBBB;">Debugger</div><div class="t" style="left:211px;top:427.00px;font-size:10.9px;color:#BBBBBB;">Console</div><div class="t" style="left:119.3px;top:454.00px;font-size:10.8px;color:#BBBBBB;">Frames</div><div class="t" style="left:327px;top:454.00px;font-size:10.85px;color:#BBBBBB;">Variables</div><div class="a" style="left:106px;top:472px;width:1181px;height:1px;background:#323232;"></div><div class="a" style="left:313px;top:446px;width:1px;height:146px;background:#323232;"></div><div class="a" style="left:106px;top:503px;width:207px;height:1px;background:#323232;"></div><div class="a" style="left:338px;top:473px;width:1px;height:119px;background:#323232;"></div><div class="a" style="left:109px;top:476px;width:145px;height:24px;border:1px solid #5E6060;border-radius:3px"></div><div class="a" style="left:117px;top:482px;width:12px;height:12px;border-radius:6px;background:#CC5F2B"></div><div class="t" style="left:135.3px;top:483.00px;font-size:12.9px;color:#BBBBBB;">MainThread</div><div class="a" style="left:106px;top:505px;width:193px;height:20px;background:#2F65CA;"></div><div class="clip" style="left:106px;top:505px;width:193px;height:72px"><div class="t" style="left:26.30000000000001px;top:4.00px;font-size:13.5px;color:#FFFFFF">devserver, devserver.py:259</div><div class="t" style="left:26.30000000000001px;top:24.00px;font-size:13.5px;color:#BBBBBB">invoke, core.py:535</div><div class="t" style="left:26.30000000000001px;top:44.00px;font-size:13.5px;color:#BBBBBB">inner, decorators.py:30</div><div class="t" style="left:26.30000000000001px;top:64.00px;font-size:13.5px;color:#BBBBBB">new_func, decorators.py:17</div></div><div class="a" style="left:302px;top:506px;width:8px;height:23px;background:#5A5C5E;border-radius:4px;"></div><div class="a" style="left:109px;top:581px;width:175px;height:8px;background:#5A5C5E;border-radius:4px;"></div><div class="a" style="left:339px;top:494px;width:934px;height:20px;background:#2F65CA;"></div><div class="t" style="left:378.5px;top:478.00px;font-size:13.1px;color:#F08A8C;">bind</div><div class="t" style="left:407.3px;top:478.00px;font-size:13.45px;color:#BBBBBB;">=</div><div class="t" style="left:418px;top:478.00px;font-size:13.45px;color:#808080;">{str}</div><div class="t" style="left:446.5px;top:478.00px;font-size:13.45px;color:#BBBBBB;">&#x27;127.0.0.1:8888&#x27;</div><div class="t" style="left:378.5px;top:498.00px;font-size:13.6px;color:#FFFFFF;">cmd = {list: 6} [&#x27;sentry&#x27;, &#x27;run&#x27;, &#x27;worker&#x27;, &#x27;-c&#x27;, &#x27;1&#x27;, &#x27;--autoreload&#x27;]</div><div class="t" style="left:378.5px;top:518.00px;font-size:13.2px;color:#F08A8C;">cwd</div><div class="t" style="left:406.5px;top:518.00px;font-size:13.45px;color:#BBBBBB;">=</div><div class="t" style="left:417px;top:518.00px;font-size:13.45px;color:#808080;">{str}</div><div class="t" style="left:446px;top:518.00px;font-size:13.45px;color:#BBBBBB;">&#x27;/Users/ryanskonnord/getsentry/sentry&#x27;</div><div class="t" style="left:378.5px;top:539.00px;font-size:12.9px;color:#5C9EF0;">daemons</div><div class="t" style="left:434.7px;top:538.00px;font-size:13.45px;color:#BBBBBB;">=</div><div class="t" style="left:445.3px;top:538.00px;font-size:13.45px;color:#808080;">{list: 5}</div><div class="t" style="left:489.8px;top:538.00px;font-size:13.45px;color:#BBBBBB;">[(&#x27;webpack&#x27;, [&#x27;/Users/ryanskonnord/getsentry/sentry/node_modules/.bin/webpack-dev-server&#x27;, &#x27;--output-pathinfo&#x27;, &#x27;--watch&#x27;, u</div><div class="t" style="left:1225.5px;top:538.00px;font-size:13.45px;color:#6A93C8;">...</div><div class="t" style="left:1238.5px;top:538.00px;font-size:13.45px;color:#6A93C8;">View</div><div class="t" style="left:378.5px;top:558.00px;font-size:13.1px;color:#F08A8C;">environment</div><div class="t" style="left:454.2px;top:558.00px;font-size:13.45px;color:#BBBBBB;">=</div><div class="t" style="left:464px;top:558.00px;font-size:13.45px;color:#808080;">{unicode}</div><div class="t" style="left:522.8px;top:558.00px;font-size:13.45px;color:#BBBBBB;">u&#x27;development&#x27;</div><div class="a" style="left:1276px;top:475px;width:8px;height:23px;background:#5A5C5E;border-radius:4px;"></div><div class="a" style="left:342px;top:581px;width:514px;height:8px;background:#5A5C5E;border-radius:4px;"></div><div class="a" style="left:56px;top:592px;width:1252px;height:1px;background:#323232;"></div><div class="a" style="left:421px;top:593px;width:83px;height:20px;background:#2E3032;"></div><div class="a" style="left:56px;top:613px;width:1252px;height:1px;background:#4A4640;"></div><div class="t" style="left:106px;top:598.00px;font-size:11.3px;color:#BBBBBB;">TypeScript 3.7.5</div><div class="t" style="left:228px;top:598.00px;font-size:11.1px;color:#BBBBBB;">3: Find</div><div class="t" style="left:297.8px;top:598.00px;font-size:11.1px;color:#BBBBBB;">4: Run</div><div class="t" style="left:366.8px;top:598.00px;font-size:11.1px;color:#BBBBBB;">6: TODO</div><div class="t" style="left:449px;top:598.00px;font-size:11.1px;color:#FFFFFF;">5: Debug</div><div class="t" style="left:533.5px;top:598.00px;font-size:11.1px;color:#BBBBBB;">9: Version Control</div><div class="t" style="left:662px;top:598.00px;font-size:11.1px;color:#BBBBBB;">Terminal</div><div class="t" style="left:741.8px;top:598.00px;font-size:11.1px;color:#BBBBBB;">Python Console</div><div class="t" style="left:1228.5px;top:598.00px;font-size:11.1px;color:#BBBBBB;">Event Log</div><div class="t" style="left:87.3px;top:620.00px;font-size:11.1px;color:#BBBBBB;">Data Sources Detected: Connection properties are detected. // Configure (today 9:17 AM)</div><div class="t" style="left:898.3px;top:620.00px;font-size:11.1px;color:#BBBBBB;">259:1</div><div class="t" style="left:938.3px;top:620.00px;font-size:11.1px;color:#BBBBBB;">LF</div><div class="t" style="left:962px;top:620.00px;font-size:11.1px;color:#BBBBBB;">UTF-8</div><div class="t" style="left:1007px;top:620.00px;font-size:11.1px;color:#BBBBBB;">4 spaces</div><div class="t" style="left:1062.9px;top:620.00px;font-size:11.1px;color:#BBBBBB;">Git: master</div><div class="t" style="left:1129.3px;top:620.00px;font-size:11.1px;color:#BBBBBB;">Python 2.7 (sentry)</div><div class="clip" style="left:385px;top:116px;width:902px;height:238px"><div class="t mono" style="left:4.5px;top:-3.00px;font-size:11.7px;color:#606366;transform:scaleY(1.17);transform-origin:0 8px;">252</div><div class="t mono" style="left:4.5px;top:15.00px;font-size:11.7px;color:#606366;transform:scaleY(1.17);transform-origin:0 8px;">253</div><div class="t mono" style="left:4.5px;top:33.00px;font-size:11.7px;color:#606366;transform:scaleY(1.17);transform-origin:0 8px;">254</div><div class="t mono" style="left:4.5px;top:51.00px;font-size:11.7px;color:#606366;transform:scaleY(1.17);transform-origin:0 8px;">255</div><div class="t mono" style="left:4.5px;top:69.00px;font-size:11.7px;color:#606366;transform:scaleY(1.17);transform-origin:0 8px;">256</div><div class="t mono" style="left:4.5px;top:87.00px;font-size:11.7px;color:#606366;transform:scaleY(1.17);transform-origin:0 8px;">257</div><div class="t mono" style="left:4.5px;top:105.00px;font-size:11.7px;color:#606366;transform:scaleY(1.17);transform-origin:0 8px;">258</div><div class="t mono" style="left:4.5px;top:123.00px;font-size:11.7px;color:#A4A3A3;transform:scaleY(1.17);transform-origin:0 8px;">259</div><div class="t mono" style="left:4.5px;top:141.00px;font-size:11.7px;color:#606366;transform:scaleY(1.17);transform-origin:0 8px;">260</div><div class="t mono" style="left:4.5px;top:159.00px;font-size:11.7px;color:#606366;transform:scaleY(1.17);transform-origin:0 8px;">261</div><div class="t mono" style="left:4.5px;top:177.00px;font-size:11.7px;color:#606366;transform:scaleY(1.17);transform-origin:0 8px;">262</div><div class="t mono" style="left:4.5px;top:195.00px;font-size:11.7px;color:#606366;transform:scaleY(1.17);transform-origin:0 8px;">263</div><div class="t mono" style="left:4.5px;top:213.00px;font-size:11.7px;color:#606366;transform:scaleY(1.17);transform-origin:0 8px;">264</div><div class="t mono" style="left:68px;top:-3.00px;font-size:11.7px;color:#A9B7C6;transform:scaleY(1.17);transform-origin:0 8px;"><span style="color:#A9B7C6">    </span><span style="color:#CC7832">if</span><span style="color:#A9B7C6"> styleguide:</span></div><div class="t mono" style="left:68px;top:15.00px;font-size:11.7px;color:#A9B7C6;transform:scaleY(1.17);transform-origin:0 8px;"><span style="color:#A9B7C6">        daemons += [_get_daemon(</span><span style="color:#A5C261">&quot;storybook&quot;</span><span style="color:#A9B7C6">)]</span></div><div class="t mono" style="left:68px;top:51.00px;font-size:11.7px;color:#A9B7C6;transform:scaleY(1.17);transform-origin:0 8px;"><span style="color:#A9B7C6">    cwd = os.path.realpath(os.path.join(settings.PROJECT_ROOT</span><span style="color:#CC7832">,</span><span style="color:#A9B7C6"> os.pardir</span><span style="color:#CC7832">,</span><span style="color:#A9B7C6"> os.pardir))</span></div><div class="t mono" style="left:68px;top:87.00px;font-size:11.7px;color:#A9B7C6;transform:scaleY(1.17);transform-origin:0 8px;"><span style="color:#A9B7C6">    manager = Manager(Printer(</span><span style="color:#AA4926">prefix</span><span style="color:#A9B7C6">=prefix))</span></div><div class="t mono" style="left:68px;top:105.00px;font-size:11.7px;color:#A9B7C6;transform:scaleY(1.17);transform-origin:0 8px;"><span style="color:#A9B7C6">    </span><span style="color:#CC7832">for</span><span style="color:#A9B7C6"> name</span><span style="color:#CC7832">,</span><span style="color:#A9B7C6"> cmd </span><span style="color:#CC7832">in</span><span style="color:#A9B7C6"> daemons:</span></div><div class="t mono" style="left:68px;top:123.00px;font-size:11.7px;color:#A9B7C6;transform:scaleY(1.17);transform-origin:0 8px;"><span style="color:#A9B7C6">        </span><span style="color:#CC7832">if</span><span style="color:#A9B7C6"> name </span><span style="color:#CC7832">not</span><span style="color:#A9B7C6"> </span><span style="color:#CC7832">in</span><span style="color:#A9B7C6"> skip_daemons:</span></div><div class="t mono" style="left:68px;top:141.00px;font-size:11.7px;color:#A9B7C6;transform:scaleY(1.17);transform-origin:0 8px;"><span style="color:#A9B7C6">            manager.add_process(name</span><span style="color:#CC7832">,</span><span style="color:#A9B7C6"> list2cmdline(cmd)</span><span style="color:#CC7832">,</span><span style="color:#A9B7C6"> </span><span style="color:#AA4926">quiet</span><span style="color:#A9B7C6">=</span><span style="color:#8888C6">False</span><span style="color:#CC7832">,</span><span style="color:#A9B7C6"> </span><span style="color:#AA4926">cwd</span><span style="color:#A9B7C6">=cwd)</span></div><div class="t mono" style="left:68px;top:177.00px;font-size:11.7px;color:#A9B7C6;transform:scaleY(1.17);transform-origin:0 8px;"><span style="color:#A9B7C6">    manager.loop()</span></div><div class="t mono" style="left:68px;top:195.00px;font-size:11.7px;color:#A9B7C6;transform:scaleY(1.17);transform-origin:0 8px;"><span style="color:#A9B7C6">    sys.exit(manager.returncode)</span></div><div class="t mono" style="left:676.5px;top:51.00px;font-size:11.7px;color:#787878;transform:scaleY(1.17);transform-origin:0 8px;font-style:italic;"><span style="color:#787878">cwd:</span><span style="color:#787878"> &#x27;/Users/ryanskonnord/getsentry/sentry&#x27;</span></div><div class="t mono" style="left:395.5px;top:87.00px;font-size:11.7px;color:#787878;transform:scaleY(1.17);transform-origin:0 8px;font-style:italic;"><span style="color:#787878">manager:</span><span style="color:#D39B33"> &lt;honcho.manager.Manager object at 0x116f6b490&gt;</span></div><div class="t mono" style="left:284.5px;top:105.00px;font-size:11.7px;color:#787878;transform:scaleY(1.17);transform-origin:0 8px;font-style:italic;"><span style="color:#787878">name:</span><span style="color:#D39B33"> &#x27;worker&#x27;</span></div><div class="t mono" style="left:396.5px;top:105.00px;font-size:11.7px;color:#787878;transform:scaleY(1.17);transform-origin:0 8px;font-style:italic;"><span style="color:#787878">cmd:</span><span style="color:#D39B33"> [&#x27;sentry&#x27;, &#x27;run&#x27;, &#x27;worker&#x27;, &#x27;-c&#x27;, &#x27;1&#x27;, &#x27;--autoreload&#x27;]</span></div></div><div class="a" style="left:868px;top:63px;width:102px;height:22px;border:1px solid #5E6060;border-radius:4px"></div><svg class="a" style="left:875px;top:65px;" width="17" height="17" viewBox="0 0 17 17"><g transform="translate(0.4,0.6) scale(1.5)"><path d="M2.6 0.3H6.2A1.5 1.5 0 0 1 7.7 1.8V5A0.9 0.9 0 0 1 6.8 5.9H3.7A1 1 0 0 0 2.7 6.9V7.6H1.5A1.3 1.3 0 0 1 0.2 6.3V3.8A1.3 1.3 0 0 1 1.5 2.5H4.9V2H2.2A0.4 0.4 0 0 1 2.6 0.3Z" transform="translate(0,0)" fill="#3E9BD5"/><path d="M7.4 9.7H3.8A1.5 1.5 0 0 1 2.3 8.2V5A0.9 0.9 0 0 1 3.2 4.1H6.3A1 1 0 0 0 7.3 3.1V2.4H8.5A1.3 1.3 0 0 1 9.8 3.7V6.2A1.3 1.3 0 0 1 8.5 7.5H5.1V8H7.8A0.4 0.4 0 0 1 7.4 9.7Z" transform="translate(0,0)" fill="#F2C40F"/></g><circle cx="13.2" cy="14.2" r="2.6" fill="#1C1C1C"/><circle cx="13.2" cy="14.2" r="2" fill="#32D233"/></svg><div class="t" style="left:895.3px;top:69.00px;font-size:11.1px;color:#BBBBBB;">Devserver</div><svg class="a" style="left:953px;top:71px;" width="10" height="6" viewBox="0 0 10 6"><path d="M0.5 0.5H9.5L5 5.5Z" fill="#9B9B9B"/></svg><svg class="a" style="left:983px;top:67px;" width="12" height="14" viewBox="0 0 12 14"><path d="M0.8 0.9V12.9L10.5 6.9Z" fill="#499C54"/></svg><svg class="a" style="left:1006px;top:66px;" width="18" height="18" viewBox="0 0 18 18"><g fill="#499C54">
      <path d="M5.5 1.2L8 4.2M12.5 1.2L10 4.2" stroke="#499C54" stroke-width="1.3"/>
      <rect x="4.8" y="3.6" width="8.4" height="11.3" rx="3.8"/>
      <rect x="1.8" y="5.3" width="14.4" height="1.5"/><rect x="1.8" y="8.7" width="14.4" height="1.5"/><rect x="1.8" y="12.1" width="14.4" height="1.5"/>
    </g><rect x="7" y="7" width="4" height="1.6" fill="#3C3F41"/><rect x="7" y="10.3" width="4" height="1.6" fill="#3C3F41"/>
    <circle cx="14.3" cy="14.2" r="2.6" fill="#232323"/><circle cx="14.3" cy="14.2" r="2" fill="#2BD62B"/></svg><svg class="a" style="left:1031px;top:66px;" width="19" height="18" viewBox="0 0 19 18"><path d="M1.5 2.5L7 1.3L12.3 2.5V5H9.3V11.5L11 10.8V12.8L7.2 14.5C3.5 13 1.6 10.5 1.5 7.5Z" fill="#AFB1B3"/><path d="M10 7V16L16.5 11.5Z" fill="#499C54"/></svg><svg class="a" style="left:1057px;top:66px;" width="19" height="18" viewBox="0 0 19 18"><path d="M9 13.3A5.6 5.6 0 1 1 13.3 6" stroke="#AFB1B3" stroke-width="1.3" fill="none"/><path d="M8.2 5.5L7.3 9" stroke="#AFB1B3" stroke-width="1"/><path d="M10 7V16L16.5 11.5Z" fill="#499C54"/></svg><svg class="a" style="left:1085px;top:66px;" width="17" height="18" viewBox="0 0 17 18"><rect x="1" y="3" width="11" height="2" fill="#AFB1B3"/><rect x="1" y="7" width="5" height="2" fill="#AFB1B3"/><rect x="1" y="11" width="5" height="2" fill="#AFB1B3"/><path d="M8 7V16L14.8 11.5Z" fill="#499C54"/></svg><div class="a" style="left:1113px;top:69px;width:10px;height:10px;background:#C75450;"></div><div class="a" style="left:1134px;top:64px;width:1px;height:20px;background:#515658;"></div><div class="t" style="left:1144.2px;top:68.00px;font-size:12.2px;color:#BBBBBB;">Git:</div><svg class="a" style="left:1176px;top:67px;" width="13" height="14" viewBox="0 0 13 14"><path d="M11.8 1.2L4 9" stroke="#3592C4" stroke-width="1.8"/><path d="M1.2 5.5V12.8H8.5Z" fill="#3592C4"/></svg><svg class="a" style="left:1201px;top:67px;" width="16" height="14" viewBox="0 0 16 14"><path d="M1.3 7L5.6 11L14.5 2" stroke="#499C54" stroke-width="2" fill="none"/></svg><svg class="a" style="left:1226px;top:66px;" width="16" height="16" viewBox="0 0 16 16"><circle cx="8" cy="8" r="6.2" stroke="#AFB1B3" stroke-width="1.4" fill="none"/><path d="M7.5 4.5V8.2L9.8 10" stroke="#AFB1B3" stroke-width="1.3" fill="none"/></svg><svg class="a" style="left:1253px;top:66px;" width="15" height="16" viewBox="0 0 15 16"><path d="M4 5H9.5A3.6 3.6 0 0 1 9.5 12.2H5" stroke="#6E6E6E" stroke-width="1.5" fill="none"/><path d="M1 5L5 1.5V8.5Z" fill="#6E6E6E"/></svg><div class="a" style="left:1276px;top:64px;width:1px;height:20px;background:#515658;"></div><svg class="a" style="left:1285px;top:66px;" width="17" height="17" viewBox="0 0 17 17"><circle cx="7" cy="6.8" r="4.8" stroke="#AFB1B3" stroke-width="1.8" fill="none"/><path d="M10.5 10.5L14.5 14.5" stroke="#AFB1B3" stroke-width="2.2"/></svg><svg class="a" style="left:86px;top:95px;" width="15" height="15" viewBox="0 0 15 15"><rect x="0.5" y="0.5" width="14" height="13.5" fill="#9AA7B0"/><rect x="2" y="3.5" width="11" height="9" fill="#2B2D2F"/><rect x="2.6" y="4.1" width="9.8" height="7.8" fill="#3F90AE"/></svg><svg class="a" style="left:151px;top:100px;" width="10" height="7" viewBox="0 0 10 7"><path d="M0.6 1H9.4L5 5.8Z" fill="#9B9B9B"/></svg><svg class="a" style="left:279px;top:95px;" width="15" height="15" viewBox="0 0 15 15"><circle cx="7.1" cy="7" r="6" stroke="#AFB1B3" stroke-width="1.5" fill="none"/><path d="M7.1 1V5M7.1 9V13M1 7H5M9.2 7H13.2" stroke="#AFB1B3" stroke-width="1.5"/></svg><svg class="a" style="left:305px;top:95px;" width="14" height="15" viewBox="0 0 14 15"><path d="M3 1H10.5L6.75 4.2Z" fill="#AFB1B3"/><rect x="1" y="6" width="12" height="2" fill="#AFB1B3"/><path d="M3 13H10.5L6.75 9.8Z" fill="#AFB1B3"/></svg><div class="a" style="left:328px;top:92px;width:1px;height:20px;background:#515658;"></div><svg class="a" style="left:338px;top:95px;" width="14" height="14" viewBox="0 0 14 14"><path d="M5.41 0.62 L8.59 0.62 L8.31 2.42 L10.31 3.58 L11.73 2.43 L13.33 5.19 L11.62 5.85 L11.62 8.15 L13.33 8.81 L11.73 11.57 L10.31 10.42 L8.31 11.58 L8.59 13.38 L5.41 13.38 L5.69 11.58 L3.69 10.42 L2.27 11.57 L0.67 8.81 L2.38 8.15 L2.38 5.85 L0.67 5.19 L2.27 2.43 L3.69 3.58 L5.69 2.42Z" fill="#AFB1B3" stroke="#AFB1B3" stroke-width="0.6" stroke-linejoin="round"/><circle cx="7.0" cy="7.0" r="2.38" fill="#3C3F41"/></svg><div class="a" style="left:365px;top:101px;width:12px;height:2px;background:#AFB1B3;"></div><div class="t" style="left:61.30px;top:143.50px;font-size:10.9px;color:#C8C8C8;transform:rotate(-90deg);transform-origin:0 0"><span style="text-decoration:underline">1</span>: Project</div><svg class="a" style="left:61px;top:150px;" width="12" height="10" viewBox="0 0 12 10"><path d="M0 0H4.5L5.5 1.5H11V9H0Z" fill="#A8A8A8"/></svg><div class="t" style="left:61.30px;top:468.50px;font-size:11.3px;color:#BBBBBB;transform:rotate(-90deg);transform-origin:0 0"><span style="text-decoration:underline">7</span>: Structure</div><svg class="a" style="left:61px;top:474px;" width="11" height="10" viewBox="0 0 11 10"><rect x="0" y="5" width="4" height="4" fill="#AFB1B3"/><rect x="5" y="5" width="4" height="4" fill="#AFB1B3"/><rect x="5" y="0" width="4" height="4" fill="#AFB1B3"/></svg><div class="t" style="left:61.30px;top:563.50px;font-size:11.0px;color:#BBBBBB;transform:rotate(-90deg);transform-origin:0 0"><span style="text-decoration:underline">2</span>: Favorites</div><svg class="a" style="left:60px;top:567px;" width="14" height="14" viewBox="0 0 14 14"><path d="M7 0.5L8.7 5.2H13.5L9.6 8.2L11.1 13L7 10L2.9 13L4.4 8.2L0.5 5.2H5.3Z" fill="#AFB1B3"/></svg><svg class="a" style="left:1292px;top:101px;" width="11" height="9" viewBox="0 0 11 9"><g fill="#AFB1B3"><rect x="0" y="0" width="2.5" height="2.5"/><rect x="3.5" y="0" width="5" height="2.5"/><rect x="9.5" y="0" width="1.5" height="2.5"/><rect x="0" y="3.5" width="2.5" height="2.5"/><rect x="3.5" y="3.5" width="5" height="2.5"/><rect x="9.5" y="3.5" width="1.5" height="2.5"/><rect x="0" y="7" width="2.5" height="2"/><rect x="3.5" y="7" width="5" height="2"/><rect x="9.5" y="7" width="1.5" height="2"/></g></svg><div class="t" style="left:1302.80px;top:116.10px;font-size:10.9px;color:#BBBBBB;transform:rotate(90deg);transform-origin:0 0">SciView</div><svg class="a" style="left:1291px;top:173px;" width="12" height="14" viewBox="0 0 12 14"><g fill="none" stroke="#AFB1B3" stroke-width="1.2"><path d="M1 5.2Q6 8 11 5.2M1 8.2Q6 11 11 8.2M1 11.2Q6 14 11 11.2"/></g><ellipse cx="6" cy="3" rx="5.2" ry="2.3" fill="#AFB1B3"/><path d="M1 3V11.2M11 3V11.2" stroke="#AFB1B3" stroke-width="1.1"/></svg><div class="t" style="left:1302.80px;top:188.20px;font-size:11.35px;color:#BBBBBB;transform:rotate(90deg);transform-origin:0 0">Database</div><div class="a" style="left:373px;top:143px;width:8px;height:22px;background:#58595B;border-radius:4px;"></div><div class="a" style="left:80px;top:378px;width:159px;height:9px;background:#58595B;border-radius:4.5px;"></div><svg class="a" style="left:483px;top:97px;" width="10" height="10" viewBox="0 0 10 10"><path d="M1 1L9 9M9 1L1 9" stroke="#6E7072" stroke-width="1.1"/></svg><svg class="a" style="left:421px;top:236px;" width="12" height="12" viewBox="0 0 12 12"><circle cx="6" cy="6" r="5.5" fill="#C75450"/></svg><svg class="a" style="left:443px;top:221px;" width="9" height="12" viewBox="0 0 9 12"><path d="M0.5 0.5H7.5V6.5L4 10.5L0.5 6.5Z" fill="#313335" stroke="#6F7173" stroke-width="1"/><path d="M1 4.5H7" stroke="#6F7173" stroke-width="1"/></svg><svg class="a" style="left:443px;top:254px;" width="9" height="12" viewBox="0 0 9 12"><path d="M0.5 10.5H7.5V4.5L4 0.5L0.5 4.5Z" fill="#313335" stroke="#6F7173" stroke-width="1"/><path d="M1 6.5H7" stroke="#6F7173" stroke-width="1"/></svg><svg class="a" style="left:443px;top:308px;" width="9" height="12" viewBox="0 0 9 12"><path d="M0.5 10.5H7.5V4.5L4 0.5L0.5 4.5Z" fill="#313335" stroke="#6F7173" stroke-width="1"/><path d="M1 6.5H7" stroke="#6F7173" stroke-width="1"/></svg><div class="a" style="left:482px;top:126px;width:1px;height:18px;background:#3B3B3B;"></div><div class="a" style="left:482px;top:233px;width:1px;height:36px;background:#393B3D;"></div><div class="a" style="left:510px;top:251px;width:1px;height:18px;background:#3B3B3B;"></div><div class="a" style="left:482px;top:233px;width:1px;height:18px;background:#25507F;"></div><div class="a" style="left:1275px;top:118px;width:10px;height:10px;background:#C39A1D;"></div><div class="a" style="left:1273px;top:132px;width:14px;height:2px;background:#7D6E50;"></div><div class="a" style="left:1273px;top:148px;width:14px;height:2px;background:#7D6E50;"></div><div class="a" style="left:1273px;top:180px;width:14px;height:2px;background:#7D6E50;"></div><div class="a" style="left:1273px;top:218px;width:14px;height:2px;background:#7D6E50;"></div><div class="a" style="left:1273px;top:296px;width:14px;height:2px;background:#C9A024;"></div><div class="a" style="left:1276px;top:317px;width:8px;height:31px;background:#4C4E50;border-radius:4px;"></div><div class="a" style="left:1273px;top:344px;width:14px;height:1px;background:#8A4B3A;"></div><svg class="a" style="left:223px;top:400px;" width="9" height="9" viewBox="0 0 9 9"><path d="M0.8 0.8L8.2 8.2M8.2 0.8L0.8 8.2" stroke="#7A8595" stroke-width="1.1"/></svg><svg class="a" style="left:1241px;top:397px;" width="14" height="14" viewBox="0 0 14 14"><path d="M5.41 0.62 L8.59 0.62 L8.31 2.42 L10.31 3.58 L11.73 2.43 L13.33 5.19 L11.62 5.85 L11.62 8.15 L13.33 8.81 L11.73 11.57 L10.31 10.42 L8.31 11.58 L8.59 13.38 L5.41 13.38 L5.69 11.58 L3.69 10.42 L2.27 11.57 L0.67 8.81 L2.38 8.15 L2.38 5.85 L0.67 5.19 L2.27 2.43 L3.69 3.58 L5.69 2.42Z" fill="#AFB1B3" stroke="#AFB1B3" stroke-width="0.6" stroke-linejoin="round"/><circle cx="7.0" cy="7.0" r="2.38" fill="#3D4B5C"/></svg><div class="a" style="left:1268px;top:403px;width:12px;height:2px;background:#AFB1B3;"></div><svg class="a" style="left:83px;top:424px;" width="16" height="17" viewBox="0 0 16 17"><path d="M13 8.5A5.3 5.3 0 1 1 8 3.4" stroke="#499C54" stroke-width="2.2" fill="none"/><path d="M8 0V7.5L14.5 3.7Z" fill="#499C54"/><rect x="9" y="10" width="5.2" height="5" fill="#BDBDBD"/></svg><div class="a" style="left:81px;top:448px;width:20px;height:1px;background:#4C4F51;"></div><svg class="a" style="left:85px;top:458px;" width="14" height="13" viewBox="0 0 14 13"><rect x="0.8" y="0.8" width="3.2" height="11.2" fill="#499C54"/><path d="M5.8 0.8V12L13 6.4Z" fill="#499C54"/></svg><div class="a" style="left:87px;top:485px;width:3px;height:11px;background:#5E6060;"></div><div class="a" style="left:92px;top:485px;width:3px;height:11px;background:#5E6060;"></div><div class="a" style="left:86px;top:512px;width:10px;height:10px;background:#C75450;"></div><div class="a" style="left:81px;top:533px;width:20px;height:1px;background:#4C4F51;"></div><svg class="a" style="left:84px;top:541px;" width="16" height="16" viewBox="0 0 16 16"><circle cx="10" cy="6" r="4.3" fill="#C75450"/><circle cx="5.6" cy="10.4" r="5.6" fill="#3C3F41"/><circle cx="5.6" cy="10.4" r="4.6" fill="#C75450"/></svg><svg class="a" style="left:87px;top:579px;" width="9" height="7" viewBox="0 0 9 7"><path d="M0.8 0.8L3.5 3.5L0.8 6.2M5 0.8L7.7 3.5L5 6.2" stroke="#AFB1B3" stroke-width="1" fill="none"/></svg><svg class="a" style="left:192px;top:426px;" width="16" height="15" viewBox="0 0 16 15"><rect x="1" y="1" width="12" height="10" fill="#A9ABAD"/><path d="M3.8 3.5L6.3 6L3.8 8.5" stroke="#3C3F41" stroke-width="1.3" fill="none"/><circle cx="11.5" cy="10.5" r="3.8" fill="#F0A732"/><path d="M11.5 8V12.5M9.7 10.8L11.5 12.6L13.3 10.8" stroke="#3C3F41" stroke-width="1" fill="none"/></svg><div class="a" style="left:265px;top:426px;width:12px;height:2px;background:#AFB1B3;"></div><div class="a" style="left:265px;top:431px;width:12px;height:2.5px;background:#3592C4;"></div><div class="a" style="left:265px;top:436px;width:12px;height:2px;background:#AFB1B3;"></div><div class="a" style="left:287px;top:421px;width:1px;height:20px;background:#4C4F51;"></div><svg class="a" style="left:296px;top:423px;" width="15" height="12" viewBox="0 0 15 12"><path d="M1.3 8.5L6 3.5L10.5 8" stroke="#3592C4" stroke-width="1.8" fill="none"/><path d="M7 8.8H13V2.8Z" fill="#3592C4"/></svg><div class="a" style="left:298px;top:435px;width:12px;height:2px;background:#AFB1B3;"></div><svg class="a" style="left:324px;top:423px;" width="12" height="11" viewBox="0 0 12 11"><path d="M6 0.5V6" stroke="#3592C4" stroke-width="2"/><path d="M1.5 5H10.5L6 10Z" fill="#3592C4"/></svg><div class="a" style="left:324px;top:435px;width:12px;height:2px;background:#AFB1B3;"></div><svg class="a" style="left:349px;top:423px;" width="14" height="11" viewBox="0 0 14 11"><path d="M1 1.5H5M1 3.7H4M1 5.9H3.5" stroke="#AFB1B3" stroke-width="0.9"/><path d="M8.5 0.5V6" stroke="#3592C4" stroke-width="2"/><path d="M4 5H13L8.5 10Z" fill="#3592C4"/></svg><div class="a" style="left:350px;top:435px;width:12px;height:2px;background:#AFB1B3;"></div><svg class="a" style="left:376px;top:423px;" width="12" height="11" viewBox="0 0 12 11"><path d="M6 0.5V6" stroke="#5E6060" stroke-width="2"/><path d="M1.5 5H10.5L6 10Z" fill="#5E6060"/></svg><div class="a" style="left:376px;top:435px;width:12px;height:2px;background:#5E6060;"></div><svg class="a" style="left:402px;top:423px;" width="12" height="11" viewBox="0 0 12 11"><path d="M6 4.5V10.5" stroke="#3592C4" stroke-width="2"/><path d="M1.5 5.5H10.5L6 0.5Z" fill="#3592C4"/></svg><div class="a" style="left:402px;top:435px;width:12px;height:2px;background:#AFB1B3;"></div><svg class="a" style="left:427px;top:423px;" width="16" height="17" viewBox="0 0 16 17"><path d="M1.5 1.5L6.5 6.5" stroke="#3592C4" stroke-width="2"/><path d="M2.5 9H9V2.5Z" fill="#3592C4"/><path d="M9.5 6.5H13.5M11.5 6.5V14.5M9.5 14.5H13.5" stroke="#BDBDBD" stroke-width="0.9"/></svg><div class="a" style="left:450px;top:421px;width:1px;height:20px;background:#4C4F51;"></div><svg class="a" style="left:460px;top:424px;" width="14" height="14" viewBox="0 0 14 14"><rect x="1.2" y="1.2" width="11.6" height="11.6" fill="none" stroke="#AFB1B3" stroke-width="1.6"/><rect x="3" y="3" width="8" height="2" fill="#AFB1B3"/><g fill="#AFB1B3"><rect x="3" y="6.5" width="2" height="2"/><rect x="6" y="6.5" width="2" height="2"/><rect x="9" y="6.5" width="2" height="2"/><rect x="3" y="9.5" width="2" height="2"/><rect x="6" y="9.5" width="2" height="2"/><rect x="9" y="9.5" width="2" height="2"/></g></svg><svg class="a" style="left:1266px;top:425px;" width="17" height="16" viewBox="0 0 17 16"><g fill="#AFB1B3"><rect x="0.7" y="0.7" width="7" height="5"/><rect x="8.7" y="0.7" width="4" height="5"/><rect x="0.7" y="7" width="12" height="4"/></g><path d="M11.5 12H16L13.75 14.5Z" fill="#DDDDDD"/></svg><svg class="a" style="left:238px;top:486px;" width="9" height="6" viewBox="0 0 9 6"><path d="M0.5 0.5H8.5L4.5 5.5Z" fill="#9B9B9B"/></svg><svg class="a" style="left:266px;top:478px;" width="12" height="20" viewBox="0 0 12 20"><path d="M6 2V17M1.5 6.5L6 2L10.5 6.5" stroke="#5E6060" stroke-width="1.6" fill="none"/></svg><svg class="a" style="left:292px;top:478px;" width="12" height="20" viewBox="0 0 12 20"><path d="M6 2V17M1.5 12.5L6 17L10.5 12.5" stroke="#C9C9C9" stroke-width="1.6" fill="none"/></svg><div class="clip" style="left:106px;top:505px;width:193px;height:72px"><svg class="a" style="left:8px;top:2px" width="15" height="15"><path d="M1.8 11V1.8H11" stroke="#CFC7B8" stroke-width="1.6" fill="none"/><rect x="4.8" y="4.8" width="8.4" height="8.4" stroke="#CFC7B8" stroke-width="1.6" fill="none"/></svg><svg class="a" style="left:8px;top:22px" width="15" height="15"><path d="M1.8 11V1.8H11" stroke="#AFB1B3" stroke-width="1.6" fill="none"/><rect x="4.8" y="4.8" width="8.4" height="8.4" stroke="#AFB1B3" stroke-width="1.6" fill="none"/></svg><svg class="a" style="left:8px;top:42px" width="15" height="15"><path d="M1.8 11V1.8H11" stroke="#AFB1B3" stroke-width="1.6" fill="none"/><rect x="4.8" y="4.8" width="8.4" height="8.4" stroke="#AFB1B3" stroke-width="1.6" fill="none"/></svg><svg class="a" style="left:8px;top:62px" width="15" height="15"><path d="M1.8 11V1.8H11" stroke="#AFB1B3" stroke-width="1.6" fill="none"/><rect x="4.8" y="4.8" width="8.4" height="8.4" stroke="#AFB1B3" stroke-width="1.6" fill="none"/></svg></div><svg class="a" style="left:320px;top:480px;" width="12" height="12" viewBox="0 0 12 12"><path d="M6 0.5V11.5M0.5 6H11.5" stroke="#C9C9C9" stroke-width="1.8"/></svg><div class="a" style="left:320px;top:510px;width:11px;height:2px;background:#5E6060;"></div><svg class="a" style="left:320px;top:532px;" width="12" height="7" viewBox="0 0 12 7"><path d="M0.5 6.5H11.5L6 0.5Z" fill="#5E6060"/></svg><svg class="a" style="left:320px;top:558px;" width="12" height="7" viewBox="0 0 12 7"><path d="M0.5 0.5H11.5L6 6.5Z" fill="#5E6060"/></svg><svg class="a" style="left:322px;top:580px;" width="9" height="7" viewBox="0 0 9 7"><path d="M0.8 0.8L3.5 3.5L0.8 6.2M5 0.8L7.7 3.5L5 6.2" stroke="#AFB1B3" stroke-width="1" fill="none"/></svg><svg class="a" style="left:361px;top:478px;" width="12" height="12" viewBox="0 0 12 12"><rect x="0" y="0" width="12" height="12" fill="#3A8EA3"/><text x="6" y="9.6" font-family="Liberation Sans" font-size="9.5" text-anchor="middle" fill="#1B2E36">01</text></svg><svg class="a" style="left:342px;top:498px;" width="9" height="10" viewBox="0 0 9 10"><path d="M0.5 0.5V9.3L8.3 4.9Z" fill="#A0A0A0"/></svg><svg class="a" style="left:359px;top:497px;" width="15" height="14" viewBox="0 0 15 14"><text x="2.3" y="4.5" font-family="Liberation Sans" font-size="4.5" text-anchor="middle" fill="#9EA6AA">1</text><text x="2.3" y="8.8" font-family="Liberation Sans" font-size="4.5" text-anchor="middle" fill="#9EA6AA">2</text><text x="2.3" y="13.1" font-family="Liberation Sans" font-size="4.5" text-anchor="middle" fill="#9EA6AA">3</text><rect x="6" y="1" width="8" height="2.6" fill="#3A9FCF"/><rect x="6" y="5.5" width="8" height="2.6" fill="#3A9FCF"/><rect x="6" y="10" width="8" height="2.6" fill="#3A9FCF"/></svg><svg class="a" style="left:361px;top:518px;" width="12" height="12" viewBox="0 0 12 12"><rect x="0" y="0" width="12" height="12" fill="#3A8EA3"/><text x="6" y="9.6" font-family="Liberation Sans" font-size="9.5" text-anchor="middle" fill="#1B2E36">01</text></svg><svg class="a" style="left:342px;top:538px;" width="9" height="10" viewBox="0 0 9 10"><path d="M0.5 0.5V9.3L8.3 4.9Z" fill="#A0A0A0"/></svg><svg class="a" style="left:359px;top:537px;" width="15" height="14" viewBox="0 0 15 14"><text x="2.3" y="4.5" font-family="Liberation Sans" font-size="4.5" text-anchor="middle" fill="#9EA6AA">1</text><text x="2.3" y="8.8" font-family="Liberation Sans" font-size="4.5" text-anchor="middle" fill="#9EA6AA">2</text><text x="2.3" y="13.1" font-family="Liberation Sans" font-size="4.5" text-anchor="middle" fill="#9EA6AA">3</text><rect x="6" y="1" width="8" height="2.6" fill="#3A9FCF"/><rect x="6" y="5.5" width="8" height="2.6" fill="#3A9FCF"/><rect x="6" y="10" width="8" height="2.6" fill="#3A9FCF"/></svg><svg class="a" style="left:361px;top:558px;" width="12" height="12" viewBox="0 0 12 12"><rect x="0" y="0" width="12" height="12" fill="#3A8EA3"/><text x="6" y="9.6" font-family="Liberation Sans" font-size="9.5" text-anchor="middle" fill="#1B2E36">01</text></svg><svg class="a" style="left:88px;top:598px;" width="15" height="10" viewBox="0 0 15 10"><rect x="0" y="0" width="14" height="9.5" fill="#A9ABAD"/><text x="7" y="8.2" font-family="Liberation Sans" font-weight="bold" font-size="8.2" text-anchor="middle" fill="#3C3F41">TS</text></svg><svg class="a" style="left:211px;top:597px;" width="13" height="13" viewBox="0 0 13 13"><circle cx="5.3" cy="5.3" r="4" stroke="#AFB1B3" stroke-width="1.6" fill="none"/><path d="M8.2 8.2L11.8 11.8" stroke="#AFB1B3" stroke-width="1.8"/></svg><svg class="a" style="left:282px;top:597px;" width="10" height="11" viewBox="0 0 10 11"><path d="M0.7 0.7V10.3L9.3 5.5Z" fill="#AFB1B3"/></svg><svg class="a" style="left:351px;top:597px;" width="11" height="11" viewBox="0 0 11 11"><g fill="#AFB1B3"><rect x="0.5" y="1" width="2" height="2"/><rect x="3.5" y="1" width="7" height="2"/><rect x="0.5" y="4.5" width="2" height="2"/><rect x="3.5" y="4.5" width="7" height="2"/><rect x="0.5" y="8" width="2" height="2"/><rect x="3.5" y="8" width="7" height="2"/></g></svg><svg class="a" style="left:432px;top:595px;" width="15" height="16" viewBox="0 0 15 16"><g fill="#AFB1B3"><path d="M4.5 1L6.5 3.5M10 1L8 3.5" stroke="#AFB1B3" stroke-width="1.1"/><rect x="3.5" y="3" width="7.5" height="10.5" rx="3.5"/><rect x="1" y="5" width="13" height="1.3"/><rect x="1" y="8.2" width="13" height="1.3"/><rect x="1" y="11.2" width="13" height="1.3"/></g><circle cx="12" cy="13" r="2.5" fill="#232323"/><circle cx="12" cy="13" r="1.9" fill="#2BD62B"/></svg><svg class="a" style="left:518px;top:597px;" width="11" height="12" viewBox="0 0 11 12"><path d="M1.2 0.5V11.5M1.2 10H5.5V4.5H9" stroke="#AFB1B3" stroke-width="1.4" fill="none"/><path d="M7 1.5V7.5L10.5 4.5Z" fill="#AFB1B3"/></svg><svg class="a" style="left:645px;top:597px;" width="13" height="11" viewBox="0 0 13 11"><rect x="0.5" y="0.5" width="11.5" height="10" fill="#A9ABAD"/><path d="M2.8 2.8L5.3 5.2L2.8 7.6M6 8H9.5" stroke="#3C3F41" stroke-width="1.1" fill="none"/></svg><svg class="a" style="left:725px;top:596px;" width="13" height="13" viewBox="0 0 13 13"><path d="M4 0.8H7.8A2 2 0 0 1 9.8 2.8V5.6H4.6A1.4 1.4 0 0 0 3.2 7V8.3H2.4A1.8 1.8 0 0 1 0.6 6.5V4.3A1.8 1.8 0 0 1 2.4 2.5H4Z" fill="#AFB1B3"/><path d="M8.6 11.8H4.8A2 2 0 0 1 2.8 9.8V7H8A1.4 1.4 0 0 0 9.4 5.6V4.3H10.2A1.8 1.8 0 0 1 12 6.1V8.3A1.8 1.8 0 0 1 10.2 10.1H8.6Z" fill="#AFB1B3"/></svg><div class="a" style="left:228px;top:608.5px;width:6px;height:1px;background:#BBBBBB;"></div><div class="a" style="left:297.8px;top:608.5px;width:6px;height:1px;background:#BBBBBB;"></div><div class="a" style="left:366.8px;top:608.5px;width:6px;height:1px;background:#BBBBBB;"></div><div class="a" style="left:449px;top:608.5px;width:6px;height:1px;background:#FFFFFF;"></div><div class="a" style="left:533.5px;top:608.5px;width:6px;height:1px;background:#BBBBBB;"></div><svg class="a" style="left:1210px;top:597px;" width="15" height="14" viewBox="0 0 15 14"><path d="M7 0.5A6.3 6.3 0 1 1 0.7 6.8A6.3 6.3 0 0 1 7 0.5Z" fill="#4A9D55"/><path d="M7 7H13.4V13.3H7Z" fill="#4A9D55"/><text x="7" y="10.3" font-family="Liberation Sans" font-weight="bold" font-size="9.5" text-anchor="middle" fill="#FFFFFF">3</text></svg><svg class="a" style="left:61px;top:618px;" width="15" height="14" viewBox="0 0 15 14"><path d="M3.6 1.5H12.5V10.5H3.6Z" stroke="#AFB1B3" stroke-width="1.1" fill="none"/><path d="M1.5 3.5V12.5H10.5" stroke="#AFB1B3" stroke-width="1.1" fill="none"/></svg><svg class="a" style="left:1234px;top:617px;" width="13" height="13" viewBox="0 0 13 13"><rect x="4.5" y="6" width="8" height="6.5" fill="#AFB1B3"/><path d="M1.5 6V3.8A2.6 2.6 0 0 1 6.8 3.8V6" stroke="#AFB1B3" stroke-width="1.6" fill="none"/></svg><svg class="a" style="left:1259px;top:616px;" width="14" height="15" viewBox="0 0 14 15"><g fill="#AFB1B3"><rect x="3" y="0.5" width="8" height="4.5" rx="1"/><rect x="0.5" y="4.5" width="13" height="1.5"/><path d="M3 6.5H11V9.5A4 4 0 0 1 3 9.5Z"/><path d="M2 14.5L3.5 11.5H10.5L12 14.5Z"/></g><rect x="4.5" y="8" width="1.6" height="1.2" fill="#3C3F41"/><rect x="7.9" y="8" width="1.6" height="1.2" fill="#3C3F41"/></svg><svg class="a" style="left:1281px;top:616px;" width="18" height="16" viewBox="0 0 18 16"><path d="M3.5 11.5A3.2 3.2 0 0 1 3 5.2A4.8 4.8 0 0 1 12 4A3.5 3.5 0 0 1 14.5 9.5L11 11.5Z" fill="#AFB1B3"/><text x="8" y="9.2" font-family="Liberation Sans" font-weight="bold" font-size="8.5" text-anchor="middle" fill="#3C3F41">?</text><circle cx="13" cy="12" r="3.6" fill="#3C3F41"/><circle cx="13" cy="12" r="2.6" fill="none" stroke="#AFB1B3" stroke-width="1.6" stroke-dasharray="1.3 0.75"/></svg></div>
<div class="a" style="left:56px;top:38px;width:1252px;height:597px;border:1px solid #666;border-radius:6px;border-top-color:#8a8a8a"></div>
</body></html>
